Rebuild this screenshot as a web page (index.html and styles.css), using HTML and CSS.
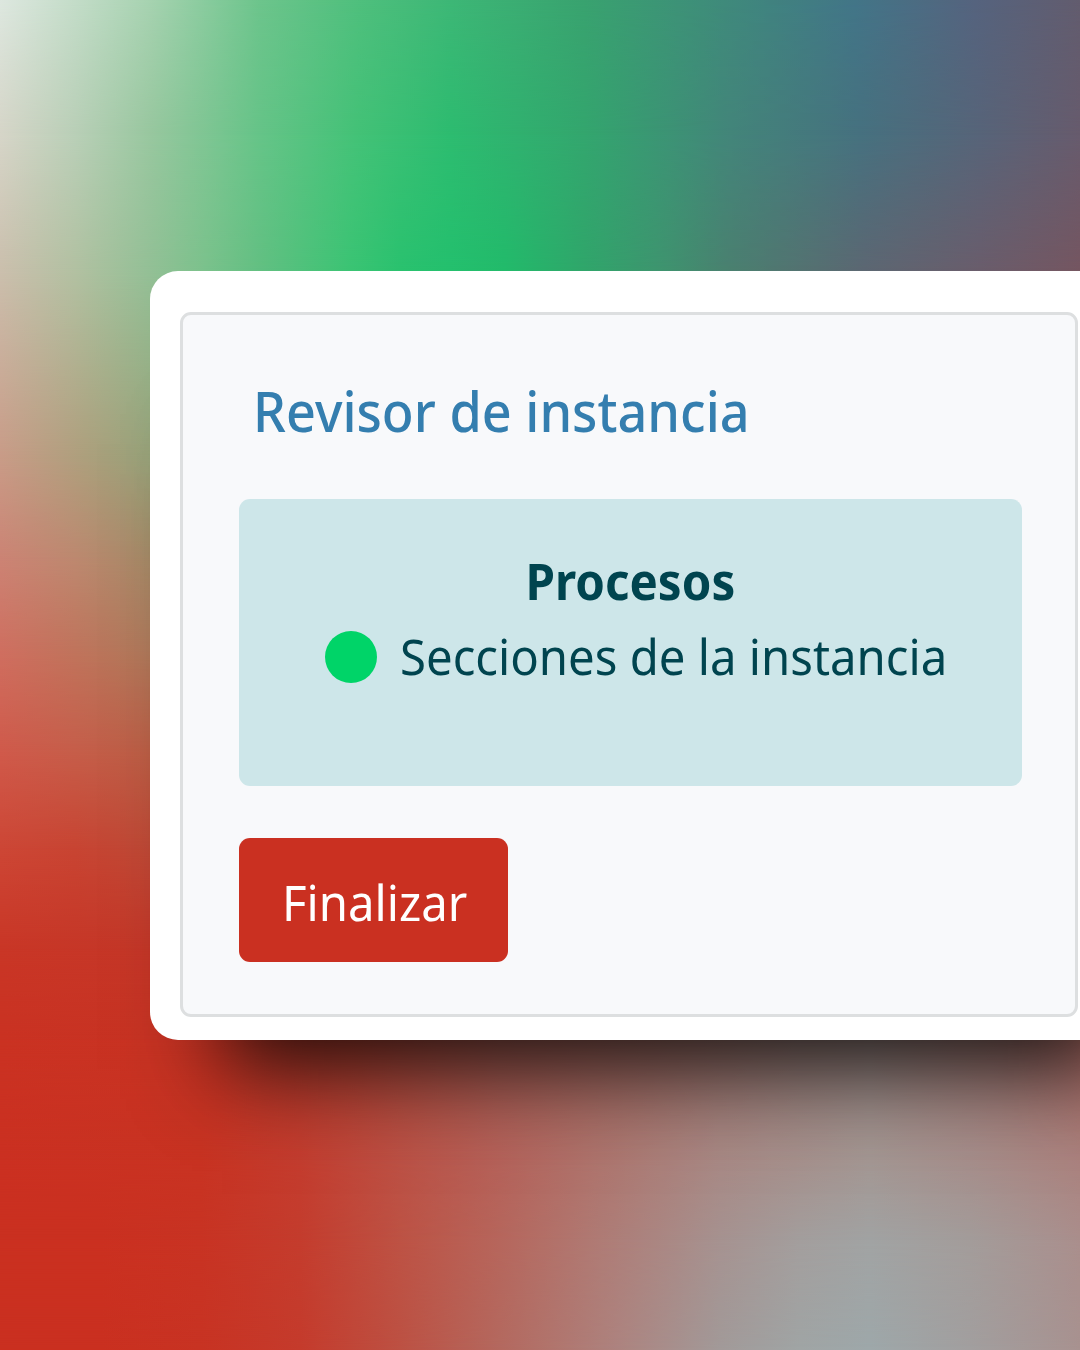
FILE: index.html
```
<!DOCTYPE html>
<html lang="es">
<head>
<meta charset="utf-8">
<title>Revisor de instancia</title>
<link rel="stylesheet" href="styles.css">
</head>
<body>
<main class="stage">
  <div class="backdrop" aria-hidden="true">
    <i class="band b1350"></i><i class="band b1240"></i><i class="band b1160"></i><i class="band b1040"></i>
    <i class="band b950"></i><i class="band b850"></i><i class="band b750"></i><i class="band b650"></i>
    <i class="band b560"></i><i class="band b460"></i><i class="band b270"></i><i class="band b135"></i><i class="band b0"></i>
  </div>
  <section class="card">
    <div class="panel">
      <h1 class="title"><span class="fit">Revisor de instancia</span></h1>
      <div class="alert">
        <strong class="heading"><span class="fit">Procesos</span></strong>
        <div class="process"><span class="dot"></span><span class="label fit">Secciones de la instancia</span></div>
      </div>
      <button class="finish" type="button"><span class="fit">Finalizar</span></button>
    </div>
  </section>
</main>
</body>
</html>
```
FILE: styles.css
```
* { box-sizing: border-box; }
body { margin: 0; font-family: "Noto Sans", "Open Sans", sans-serif; }

.stage {
  position: relative;
  width: 1080px;
  height: 1350px;
  padding: 271px 0 0 150px;
  overflow: hidden;
}

/* Mesh backdrop: each band is a horizontal ramp fading into the one below it */
.backdrop { position: absolute; inset: 0; }
.band {
  position: absolute;
  inset: 0;
  mask-image: linear-gradient(#000 var(--from), transparent var(--to));
}
.b1350 { mask-image: none; background: linear-gradient(90deg, #ca3020 0, #ca3020 100px, #c83323 200px, #c53b2c 300px, #bd5143 400px, #b4695f 500px, #ad8480 620px, #a29a99 720px, #a0a5a5 800px, #9ea8aa 870px, #a29f9f 970px, #a89290 1080px); }
.b1240 { --from: 1240px; --to: 1350px; background: linear-gradient(90deg, #ca3020 0, #ca3020 100px, #c83323 200px, #c43c2d 300px, #bd5244 400px, #b6665c 500px, #af7b75 600px, #a69290 720px, #a39e9d 800px, #a1a3a3 870px, #a39c9a 970px, #aa8e8c 1080px); }
.b1160 { --from: 1160px; --to: 1240px; background: linear-gradient(90deg, #cb3021 0, #c83322 200px, #c43d2f 300px, #bc5145 400px, #b5625a 500px, #ae756e 600px, #a88985 720px, #a49793 870px, #a68e8b 970px, #ab827e 1080px); }
.b1040 { --from: 1040px; --to: 1160px; background: linear-gradient(90deg, #ca3222 0, #c83323 150px, #c83424 220px, #bd4536 350px, #ae6056 500px, #a67068 650px, #a0847f 800px, #a08a86 870px, #a67b76 1000px, #ab6c66 1080px); }
.b950 { --from: 950px; --to: 1040px; background: linear-gradient(90deg, #c93626, #c43728 150px); }
.b850 { --from: 850px; --to: 950px; background: linear-gradient(90deg, #cd4635, #c84432 75px, #bf4936 150px); }
.b750 { --from: 750px; --to: 850px; background: linear-gradient(90deg, #d05a4b, #c65e4a 75px, #bb5f46 150px); }
.b650 { --from: 650px; --to: 750px; background: linear-gradient(90deg, #cf6f60, #c0745c 75px, #af7a5b 150px); }
.b560 { --from: 560px; --to: 650px; background: linear-gradient(90deg, #cc8374, #bd886f 75px, #a68a67 150px); }
.b460 { --from: 460px; --to: 560px; background: linear-gradient(90deg, #c99b87, #ad9f7c 85px, #98a279 150px); }
.b270 { --from: 270px; --to: 460px; background: linear-gradient(90deg, #cbbfad 0, #b2c1a2 75px, #93c096 150px, #7bc28c 205px, #62c082 260px, #3bc474 350px, #2ac26f 400px, #24c06e 450px, #22bb6b 505px, #30a66b 585px, #3d966f 655px, #4a8070 730px, #5c6773 865px, #6a5d6c 980px, #755661 1080px); }
.b135 { --from: 135px; --to: 270px; background: linear-gradient(90deg, #d6d5c8 0, #b9cfb7 75px, #98c79f 150px, #66c488 258px, #43c277 358px, #2dbc70 450px, #33a66e 585px, #43857a 730px, #46717f 860px, #576479 980px, #675b6d 1080px); }
.b0 { --from: 0px; --to: 135px; background: linear-gradient(90deg, #dde7df 0, #c3dcc8 75px, #a6d2b0 150px, #6dc48c 258px, #4fbf7d 358px, #3db776 450px, #39a26f 585px, #3f8a7b 725px, #427588 855px, #55637e 975px, #625c6e 1080px); }

.card {
  position: relative;
  width: 1032px;
  height: 769px;
  padding: 41px 103px 22px 30px;
  border-radius: 28px;
  background: #fff;
  box-shadow: 0 101px 84px -72px rgba(0, 0, 0, .84);
}
.panel {
  width: 898px;
  height: 705px;
  padding: 57px 53px 0 56px;
  border: 3px solid #dddfe0;
  border-radius: 11px;
  background: #f8f9fb;
  filter: blur(.7px);
}
.fit { display: inline-block; white-space: nowrap; transform: scaleX(.946); transform-origin: 0 50%; }

.title {
  height: 80px;
  margin: -1px 0 48px 14px;
  color: #347eaf;
  font-size: 56px;
  font-weight: 500;
  line-height: 78px;
}
.title .fit { transform: scaleX(.932); }
.alert {
  height: 287px;
  padding-top: 45px;
  border-radius: 11px;
  background: #cde6e9;
  color: #00444f;
  font-size: 50px;
  line-height: 75px;
}
.heading { display: block; height: 75px; text-align: center; }
.heading .fit { transform: scaleX(.95); transform-origin: 50% 50%; }
.process { display: flex; align-items: center; gap: 23px; height: 75px; padding-left: 86px; }
.dot { flex: none; width: 52px; height: 52px; border-radius: 50%; background: #00d468; }
.finish {
  display: block;
  width: 269px;
  height: 124px;
  margin: 52px 0 0;
  padding: 4px 0 0 43px;
  border: 0;
  border-radius: 11px;
  background: #ca3021;
  color: #fff;
  font: 400 50px/75px "Noto Sans", "Open Sans", sans-serif;
  text-align: left;
}
```
